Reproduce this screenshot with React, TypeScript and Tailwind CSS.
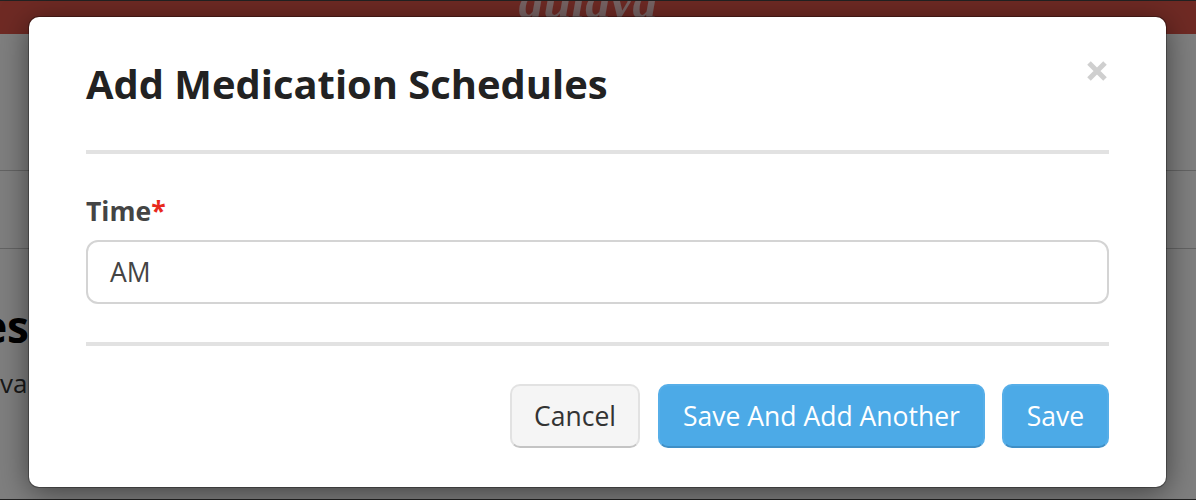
export default function App() {
  return (
    <div className="relative h-[500px] w-[1196px] overflow-hidden bg-white font-['Open_Sans',sans-serif]">
      {/* page behind the dialog */}
      <div className="flex h-full flex-col">
        <div className="relative flex h-[34px] justify-center overflow-hidden bg-[#de5449] pr-[20px]">
          <span className="mt-[-29px] h-[60px] font-['Liberation_Serif',serif] text-[50px] font-bold italic leading-[60px] text-[#f0c8c8]">
            gulayd
          </span>
        </div>
        <div className="h-[137px] border-b border-[#c8c8c8]"></div>
        <div className="h-[78px] border-b border-[#c8c8c8]"></div>
        <div className="overflow-hidden pt-[47px] text-black">
          <div className="flex w-[29px] justify-end whitespace-nowrap text-[44px] font-bold leading-[60px]">
            <span className="shrink-0">Medication Schedules</span>
          </div>
          <div className="mt-[10px] whitespace-nowrap text-[26px] leading-[34px] text-[#333]">vailable</div>
        </div>
      </div>
      {/* backdrop */}
      <div className="absolute inset-0 border-y border-[#222] bg-black/50"></div>
      {/* dialog */}
      <div className="absolute left-[29px] top-[17px] flex h-[470px] w-[1137px] flex-col rounded-[10px] bg-white px-[57px] shadow-[0_5px_30px_rgba(0,0,0,0.5)] ring-1 ring-black/30">
        <div className="relative flex h-[137px] shrink-0 items-start border-b-[4px] border-[#e2e2e2]">
          <h1 className="mt-[42px] text-[39.9px] font-bold leading-[50px] text-[#222]">Add Medication Schedules</h1>
          <svg className="absolute right-[2px] top-[44px]" width="20" height="20" viewBox="0 0 20 20">
            <path d="M2 2 L18 18 M18 2 L2 18" stroke="#cfcfcf" strokeWidth="5" fill="none" />
          </svg>
        </div>
        <div className="mt-[40px] text-[26.5px] font-bold leading-[34px] text-[#444]">
          Time<span className="text-[#e8291c]">*</span>
        </div>
        <div className="mt-[12px] flex h-[64px] items-center rounded-[12px] border-2 border-[#d4d4d4] bg-white px-[22px] pt-[2px] text-[26.5px] text-[#444]">
          AM
        </div>
        <div className="mt-[38px] h-[4px] bg-[#e2e2e2]"></div>
        <div className="mt-[38px] flex justify-end">
          <button className="h-[64px] w-[130px] rounded-[10px] border-2 border-[#e2e2e2] border-b-[#c4c4c4] bg-[#f5f5f5] pt-[2px] text-[26.5px] text-[#333]">
            Cancel
          </button>
          <button className="ml-[18px] h-[64px] w-[327px] rounded-[10px] border-2 border-[#56aee8] border-b-[#3f8fc6] bg-[#4caae7] pt-[2px] text-[26.5px] text-white">
            Save And Add Another
          </button>
          <button className="ml-[17px] h-[64px] w-[107px] rounded-[10px] border-2 border-[#56aee8] border-b-[#3f8fc6] bg-[#4caae7] pt-[2px] text-[26.5px] text-white">
            Save
          </button>
        </div>
      </div>
    </div>
  );
}
